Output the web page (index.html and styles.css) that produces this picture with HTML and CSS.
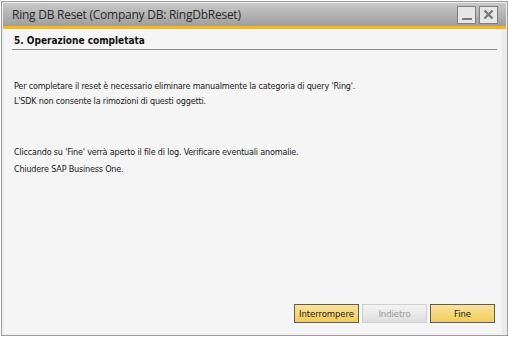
FILE: index.html
```html
<!DOCTYPE html>
<html>
<head>
<meta charset="utf-8">
<link rel="stylesheet" href="styles.css">
</head>
<body>
<div class="window">
  <div class="titlebar">
    <span class="title">Ring DB Reset (Company DB: RingDbReset)</span>
    <div class="tb-buttons">
      <div class="tb-btn"><svg width="17" height="16" viewBox="0 0 17 16"><rect x="4" y="11" width="10" height="2" fill="#7a7a7a"/></svg></div>
      <div class="tb-btn"><svg width="17" height="16" viewBox="0 0 17 16"><path d="M4.5 3.5 L12.5 11.5 M12.5 3.5 L4.5 11.5" stroke="#7a7a7a" stroke-width="2.4"/></svg></div>
    </div>
  </div>
  <div class="accent"></div>
  <div class="content">
    <div class="main">
      <div class="heading">5. Operazione completata</div>
      <div class="block first">
        <p>Per completare il reset è necessario eliminare manualmente la categoria di query 'Ring'.</p>
        <p>L'SDK non consente la rimozioni di questi oggetti.</p>
      </div>
      <div class="block second">
        <p>Cliccando su 'Fine' verrà aperto il file di log. Verificare eventuali anomalie.</p>
        <p>Chiudere SAP Business One.</p>
      </div>
      <div class="spacer"></div>
      <div class="buttons">
        <button class="btn">Interrompere</button>
        <button class="btn disabled">Indietro</button>
        <button class="btn">Fine</button>
      </div>
    </div>
    <div class="rightstrip"></div>
  </div>
</div>
</body>
</html>
```
FILE: styles.css
```css
html, body {
  margin: 0;
  padding: 0;
  background: #ffffff;
}
body {
  padding: 1px 0 0 1px;
  font-family: "DejaVu Sans Condensed", "DejaVu Sans", sans-serif;
}
.window {
  width: 503px;
  height: 331px;
  border: 1px solid #9c9c9c;
  box-shadow: 1px 1px 1px #b8b8b8, 2px 2px 2px #d8d8d8;
  background: #efefef;
  display: flex;
  flex-direction: column;
  padding: 1px;
  box-sizing: content-box;
}
.titlebar {
  height: 23px;
  background: linear-gradient(#c9c9c9, #9e9e9e);
  display: flex;
  align-items: center;
  justify-content: space-between;
  padding: 0 8px 0 9px;
}
.title {
  font-family: "Open Sans", "DejaVu Sans", sans-serif;
  font-size: 12px;
  color: #2a2a2a;
  letter-spacing: -0.25px;
}
.tb-buttons {
  display: flex;
  gap: 3px;
  margin-top: 1px;
}
.tb-btn {
  width: 17px;
  height: 16px;
  border: 1px solid #7f7f7f;
  background: #e6e6e6;
  display: flex;
}
.accent {
  height: 3px;
  background: #fbb614;
}
.content {
  flex: 1;
  display: flex;
  background: #f5f5f5;
  border-left: 1px solid #ececec;
}
.main {
  flex: 1;
  display: flex;
  flex-direction: column;
  padding: 0 3px 0 8px;
}
.heading {
  font-family: "DejaVu Sans Condensed", "DejaVu Sans", sans-serif;
  font-stretch: condensed;
  font-weight: bold;
  font-size: 10px;
  color: #111;
  padding: 6px 0 3px 2px;
  border-bottom: 1px solid #8c8c8c;
  margin-right: 2px;
}
.block p {
  margin: 0;
  font-family: "DejaVu Sans Condensed", "DejaVu Sans", sans-serif;
  font-stretch: condensed;
  font-size: 9px;
  letter-spacing: -0.2px;
  color: #1a1a1a;
  line-height: 15px;
  padding-left: 2px;
}
.block.first {
  margin-top: 29px;
}
.block.second {
  margin-top: 35px;
}
.block.second p {
  line-height: 17px;
}
.spacer {
  flex: 1;
}
.buttons {
  display: flex;
  justify-content: flex-end;
  gap: 3px;
  margin-right: 4px;
  margin-bottom: 11px;
}
.btn {
  width: 65px;
  height: 19px;
  padding: 0;
  border: 1px solid #5e5e5e;
  background: linear-gradient(#fae3a0, #f3cd58);
  font-family: "DejaVu Sans Condensed", "DejaVu Sans", sans-serif;
  font-stretch: condensed;
  font-size: 9.5px;
  letter-spacing: -0.1px;
  color: #1a1a1a;
}
.btn.disabled {
  border-color: #cfcfcf;
  background: linear-gradient(#f4f4f4, #dedede);
  color: #9a9a9a;
}
.rightstrip {
  width: 4px;
  background: #ececec;
}
```
